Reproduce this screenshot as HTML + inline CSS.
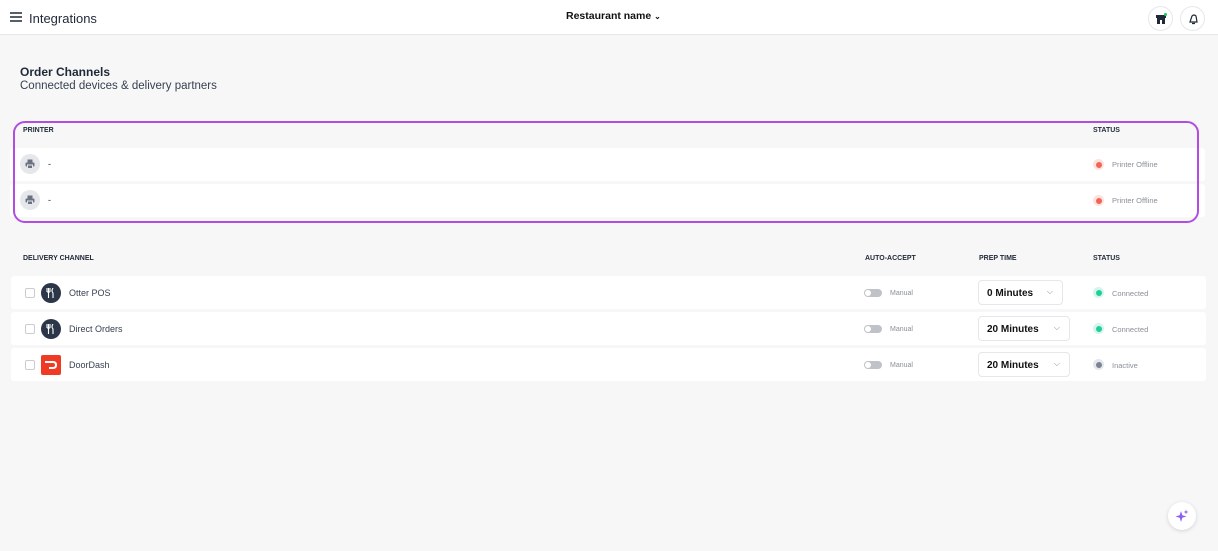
<!DOCTYPE html>
<html><head><meta charset="utf-8"><style>
*{box-sizing:border-box;margin:0;padding:0}
body{width:1218px;height:551px;background:#f7f7f7;font-family:"Liberation Sans",sans-serif;color:#1f2937;position:relative;overflow:hidden}
.hdr{position:absolute;left:0;top:0;width:1218px;height:35px;background:#fff;border-bottom:1px solid #e5e7eb}
.abs{position:absolute}
.row{position:absolute;left:11px;width:1195px;background:#fff;border-radius:3px}
.th{position:absolute;font-size:7px;font-weight:bold;color:#1f2937}
.dot{position:absolute;width:11px;height:11px;border-radius:50%}
.dot i{position:absolute;left:2.5px;top:2.5px;width:6px;height:6px;border-radius:50%}
.st{position:absolute;font-size:7.5px;color:#8a8f98}
.pic{position:absolute;left:20px;width:20px;height:20px;border-radius:50%;background:#e5e7eb}
.cb{position:absolute;left:25px;width:10px;height:10px;border:1px solid #c9ccd1;border-radius:2px;background:#fff}
.logo{position:absolute;left:41px;width:20px;height:20px;border-radius:50%;background:#2b3648}
.nm{position:absolute;left:69px;font-size:9px;color:#374151}
.tg{position:absolute;left:864px;width:18px;height:8px;border-radius:4px;background:#bfc2c6}
.tg::after{content:"";position:absolute;left:1px;top:1px;width:6px;height:6px;border-radius:50%;background:#fff}
.man{position:absolute;left:890px;font-size:7px;color:#8a8f98}
.sel{position:absolute;left:978px;height:25px;border:1px solid #e5e7eb;border-radius:4px;background:#fff;font-size:10px;font-weight:bold;padding:7px 0 0 8px;color:#111}
.sel span{position:absolute;right:9px;top:6px;font-size:8px;color:#888;font-weight:normal}
</style></head><body>
<div class="hdr">
 <svg class="abs" style="left:10px;top:12px" width="12" height="10"><path d="M0 1h12M0 5h12M0 9h12" stroke="#1f2937" stroke-width="1.4"/></svg>
 <div class="abs" style="left:29px;top:11px;font-size:13px;color:#1f2937;font-weight:500">Integrations</div>
 <div class="abs" style="left:566px;top:10px;font-size:10.5px;font-weight:bold;color:#111">Restaurant name <span style="font-size:8px">⌄</span></div>
 <div class="abs" style="left:1148px;top:6px;width:25px;height:25px;border-radius:50%;border:1px solid #e5e7eb;background:#fff">
  <svg class="abs" style="left:6px;top:6px" width="12" height="12"><rect x="1" y="2" width="10" height="3" fill="#1f2937"/><rect x="2" y="5" width="8" height="6" fill="#1f2937"/><rect x="5" y="7" width="2" height="4" fill="#fff"/><circle cx="10.5" cy="1.5" r="1.5" fill="#22c55e"/></svg></div>
 <div class="abs" style="left:1180px;top:6px;width:25px;height:25px;border-radius:50%;border:1px solid #e5e7eb;background:#fff">
  <svg class="abs" style="left:6px;top:6px" width="12" height="12"><path d="M3 9L5 3Q7 1 9 3L10 9Z M5 10.5h3" fill="none" stroke="#1f2937" stroke-width="1.2"/></svg></div>
</div>
<div class="abs" style="left:20px;top:65px;font-size:12px;font-weight:bold;color:#1f2937">Order Channels</div>
<div class="abs" style="left:20px;top:80px;font-size:11.5px;color:#374151">Connected devices &amp; delivery partners</div>

<div class="row" style="top:148px;height:33px;left:10px"></div>
<div class="row" style="top:184px;height:33px;left:10px"></div>
<div class="abs" style="left:13px;top:121px;width:1186px;height:102px;border:2px solid #b34de0;border-radius:12px"></div>
<div class="th" style="left:23px;top:127px">PRINTER</div>
<div class="th" style="left:1093px;top:127px">STATUS</div>
<div class="pic" style="top:154px"><svg class="abs" style="left:5px;top:5px" width="10" height="10"><rect x="2.5" y="0.5" width="5" height="3" fill="#6b7280"/><rect x="0.5" y="3.5" width="9" height="4" rx="1" fill="#6b7280"/><rect x="2.5" y="6" width="5" height="3.5" fill="#6b7280" stroke="#e5e7eb"/></svg></div>
<div class="abs" style="left:48px;top:159px;font-size:9px">-</div>
<div class="pic" style="top:190px"><svg class="abs" style="left:5px;top:5px" width="10" height="10"><rect x="2.5" y="0.5" width="5" height="3" fill="#6b7280"/><rect x="0.5" y="3.5" width="9" height="4" rx="1" fill="#6b7280"/><rect x="2.5" y="6" width="5" height="3.5" fill="#6b7280" stroke="#e5e7eb"/></svg></div>
<div class="abs" style="left:48px;top:195px;font-size:9px">-</div>
<div class="dot" style="left:1093px;top:159px;background:#fde2e0"><i style="background:#f26555"></i></div>
<div class="st" style="left:1112px;top:160px">Printer Offline</div>
<div class="dot" style="left:1093px;top:195px;background:#fde2e0"><i style="background:#f26555"></i></div>
<div class="st" style="left:1112px;top:196px">Printer Offline</div>

<div class="th" style="left:23px;top:255px">DELIVERY CHANNEL</div>
<div class="th" style="left:865px;top:255px">AUTO-ACCEPT</div>
<div class="th" style="left:979px;top:255px">PREP TIME</div>
<div class="th" style="left:1093px;top:255px">STATUS</div>

<div class="row" style="top:276px;height:33px"></div>
<div class="row" style="top:312px;height:33px"></div>
<div class="row" style="top:348px;height:33px"></div>

<div class="cb" style="top:288px"></div>
<div class="logo" style="top:283px"><svg class="abs" style="left:5px;top:5px" width="10" height="10"><path d="M1 0v4M2.5 0v4M4 0v4M1 4h3M2.5 4v6M7 0q-2 3 0 5v5" stroke="#fff" stroke-width="1.1" fill="none"/></svg></div>
<div class="nm" style="top:288px">Otter POS</div>
<div class="cb" style="top:324px"></div>
<div class="logo" style="top:319px"><svg class="abs" style="left:5px;top:5px" width="10" height="10"><path d="M1 0v4M2.5 0v4M4 0v4M1 4h3M2.5 4v6M7 0q-2 3 0 5v5" stroke="#fff" stroke-width="1.1" fill="none"/></svg></div>
<div class="nm" style="top:324px">Direct Orders</div>
<div class="cb" style="top:360px"></div>
<div class="logo" style="top:355px;border-radius:2px;background:#ef3b24"><svg class="abs" style="left:3px;top:5px" width="14" height="10"><path d="M1 2h8q3 0 3 3t-3 3h-4" stroke="#fff" stroke-width="2" fill="none"/></svg></div>
<div class="nm" style="top:360px">DoorDash</div>

<div class="tg" style="top:289px"></div><div class="man" style="top:290px">Manual</div>
<div class="tg" style="top:325px"></div><div class="man" style="top:326px">Manual</div>
<div class="tg" style="top:361px"></div><div class="man" style="top:362px">Manual</div>

<div class="sel" style="top:280px;width:85px">0 Minutes<span>⌵</span></div>
<div class="sel" style="top:316px;width:92px">20 Minutes<span>⌵</span></div>
<div class="sel" style="top:352px;width:92px">20 Minutes<span>⌵</span></div>

<div class="dot" style="left:1093px;top:287px;background:#d5f5ea"><i style="background:#1fcf9a"></i></div><div class="st" style="left:1112px;top:289px">Connected</div>
<div class="dot" style="left:1093px;top:323px;background:#d5f5ea"><i style="background:#1fcf9a"></i></div><div class="st" style="left:1112px;top:325px">Connected</div>
<div class="dot" style="left:1093px;top:359px;background:#e5e7eb"><i style="background:#7b8394"></i></div><div class="st" style="left:1112px;top:361px">Inactive</div>

<div class="abs" style="left:1168px;top:502px;width:28px;height:28px;border-radius:50%;background:#fff;box-shadow:0 1px 4px rgba(0,0,0,.15)">
 <svg class="abs" style="left:7px;top:7px" width="14" height="14"><path d="M6 2L7.3 6.2L11.5 7.5L7.3 8.8L6 13L4.7 8.8L0.5 7.5L4.7 6.2Z M11 0.5L11.6 2.4L13.5 3L11.6 3.6L11 5.5L10.4 3.6L8.5 3L10.4 2.4Z" fill="#8b5cf6"/></svg></div>
</body></html>
